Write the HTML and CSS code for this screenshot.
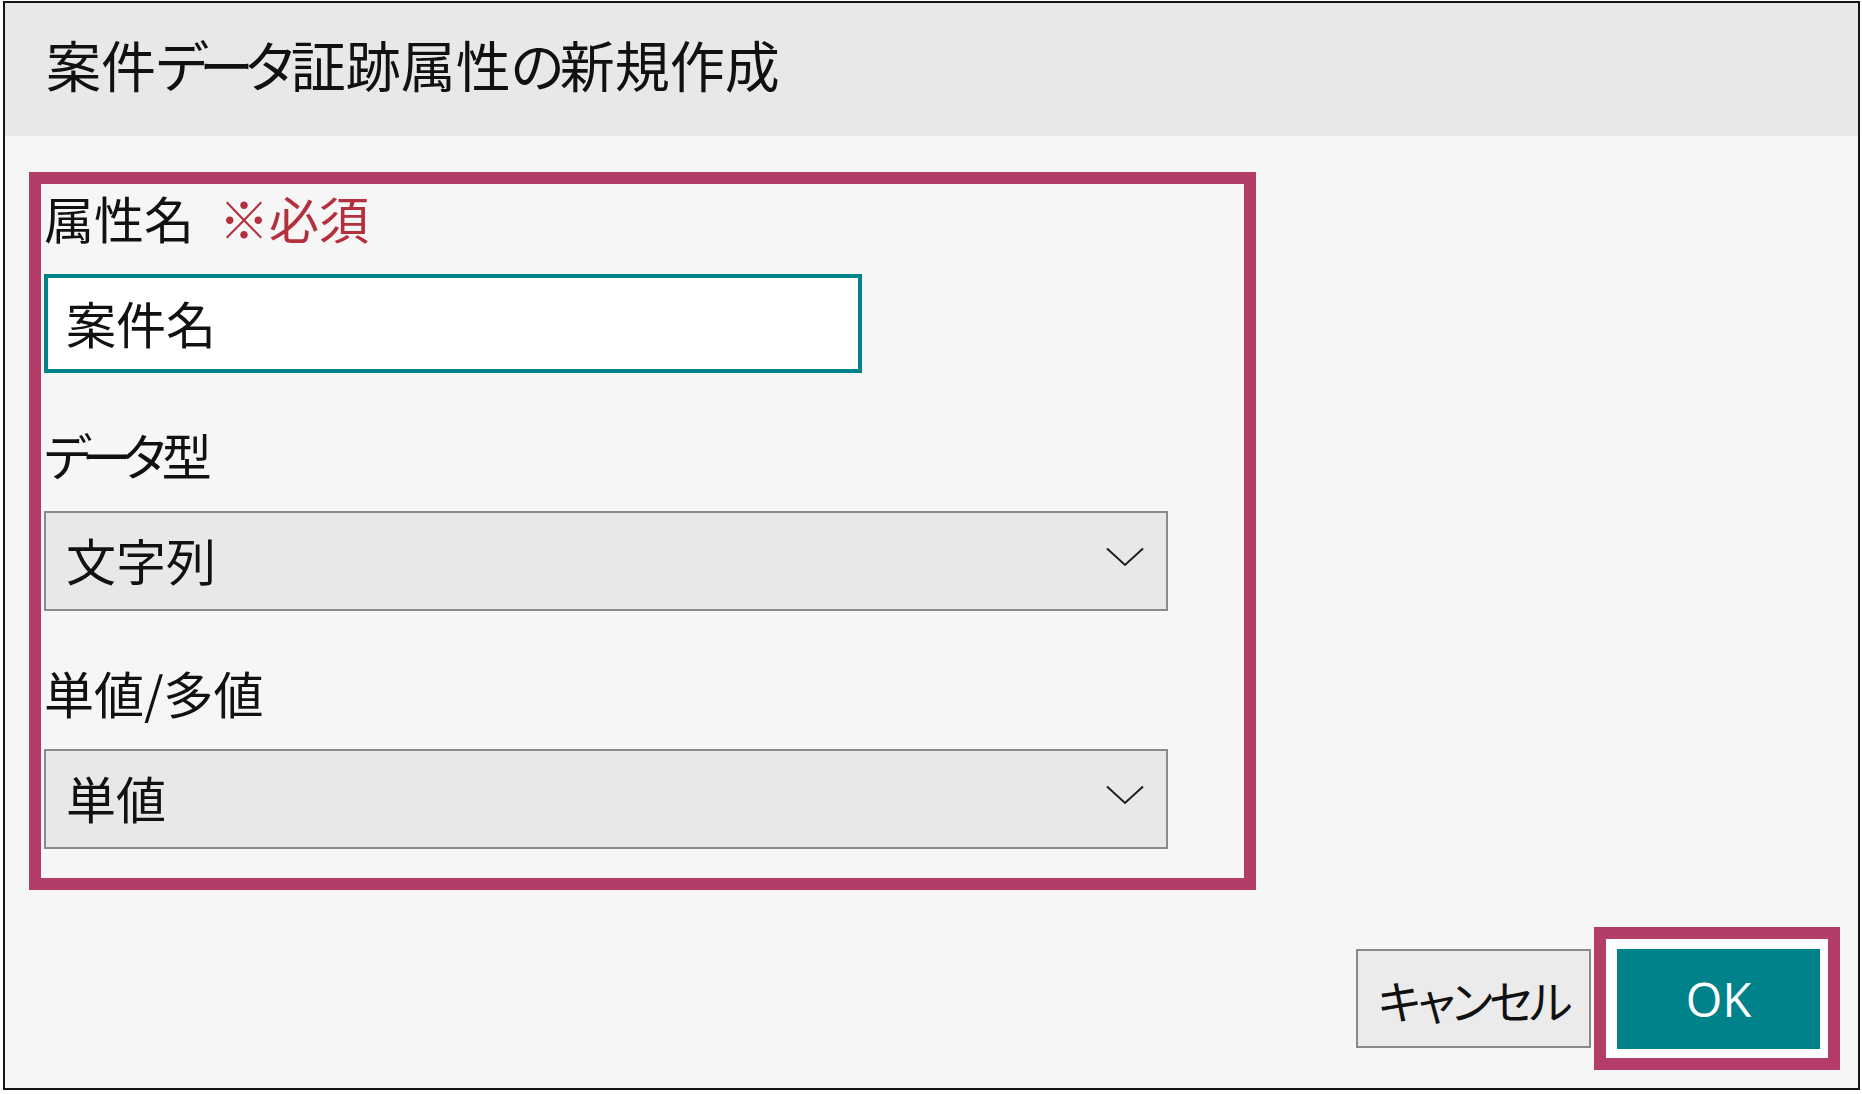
FILE: index.html
```html
<!DOCTYPE html>
<html lang="ja">
<head>
<meta charset="utf-8">
<title>案件データ証跡属性の新規作成</title>
<link rel="stylesheet" href="styles.css">
</head>
<body>
<div class="dialog" role="dialog" aria-labelledby="dlg-title">
  <div class="dialog-header">
    <h1 class="dialog-title" id="dlg-title">案件<span class="kana">データ</span>証跡属性<span class="kana-sm">の</span>新規作成</h1>
  </div>
  <div class="dialog-body">
    <div class="form-frame">
      <div class="field">
        <div class="field-label">属性名<span class="required">※必須</span></div>
        <div class="text-input" role="textbox">案件名</div>
      </div>
      <div class="field">
        <div class="field-label"><span class="kana-label">データ</span>型</div>
        <div class="select" role="combobox">
          <span class="select-value">文字列</span>
          <svg class="chevron" width="38" height="20" viewBox="0 0 38 20"><path d="M1 1.5 L19 18 L37 1.5" fill="none" stroke="#1e1e1e" stroke-width="2"/></svg>
        </div>
      </div>
      <div class="field">
        <div class="field-label">単値/多値</div>
        <div class="select" role="combobox">
          <span class="select-value">単値</span>
          <svg class="chevron" width="38" height="20" viewBox="0 0 38 20"><path d="M1 1.5 L19 18 L37 1.5" fill="none" stroke="#1e1e1e" stroke-width="2"/></svg>
        </div>
      </div>
    </div>
    <div class="dialog-footer">
      <button class="btn btn-cancel" type="button">キャンセル</button>
      <div class="focus-frame">
        <button class="btn btn-ok" type="button">OK</button>
      </div>
    </div>
  </div>
</div>
</body>
</html>
```

FILE: styles.css
```css
html, body {
  margin: 0;
  padding: 0;
  background: #ffffff;
}

body {
  font-family: "Noto Sans CJK JP", "Noto Sans", sans-serif;
  color: #111111;
}

.dialog {
  box-sizing: border-box;
  margin: 1px 0 0 3px;
  width: 1857px;
  height: 1089px;
  border: 2px solid #161616;
  background: #f6f6f6;
  display: flex;
  flex-direction: column;
}

.dialog-header {
  box-sizing: border-box;
  height: 133px;
  background: #e8e8e8;
  display: flex;
  align-items: center;
  padding: 0 0 12px 41px;
}

.dialog-title {
  margin: 0;
  font-size: 55px;
  font-weight: 400;
  line-height: 1;
  font-feature-settings: "palt";
  color: #111111;
  white-space: nowrap;
}

.kana {
  letter-spacing: -8px;
  margin-right: 5px;
}

.kana-sm {
  letter-spacing: -4px;
}

.kana-label {
  letter-spacing: -9px;
  margin-right: 5px;
}

.dialog-body {
  flex: 1;
  display: flex;
  flex-direction: column;
  padding: 36px 18px 18px 24px;
}

.form-frame {
  box-sizing: border-box;
  align-self: flex-start;
  width: 1227px;
  border: 12px solid #b43c68;
  padding: 2px 0 29px 3px;
  display: flex;
  flex-direction: column;
  gap: 50px;
}

.field {
  display: flex;
  flex-direction: column;
}

.field-label {
  font-size: 50px;
  line-height: 62px;
  height: 68px;
  margin-bottom: 20px;
  font-feature-settings: "palt";
  white-space: nowrap;
}

.required {
  color: #b3303c;
  margin-left: 25px;
}

.text-input {
  box-sizing: border-box;
  width: 818px;
  height: 99px;
  border: 4px solid #00828a;
  background: #ffffff;
  padding: 0 0 4px 18px;
  font-size: 50px;
  display: flex;
  align-items: center;
}

.select {
  box-sizing: border-box;
  width: 1124px;
  height: 100px;
  border: 2px solid #8a8a8a;
  background: #e8e8e8;
  padding: 0 22px 0 20px;
  font-size: 50px;
  display: flex;
  align-items: center;
  justify-content: space-between;
}

.select-value {
  margin-bottom: 5px;
}

.chevron {
  display: block;
  margin-bottom: 8px;
}

.dialog-footer {
  margin-top: 37px;
  display: flex;
  justify-content: flex-end;
  align-items: center;
}

.btn {
  box-sizing: border-box;
  margin: 0;
  padding: 0;
  cursor: pointer;
}

.btn-cancel {
  width: 235px;
  height: 99px;
  border: 2px solid #8a8a8a;
  background: #ebebeb;
  color: #111111;
  font-family: "Noto Sans CJK JP", sans-serif;
  font-size: 46px;
  font-feature-settings: "palt";
  letter-spacing: -3.5px;
  margin-right: 3px;
}

.focus-frame {
  border: 12px solid #b43c68;
  background: #ffffff;
  padding: 10px 8px 9px 11px;
  display: flex;
}

.btn-ok {
  width: 203px;
  height: 100px;
  border: none;
  background: #00828a;
  color: #ffffff;
  font-family: "Open Sans", "Noto Sans", sans-serif;
  font-size: 47px;
}
```
